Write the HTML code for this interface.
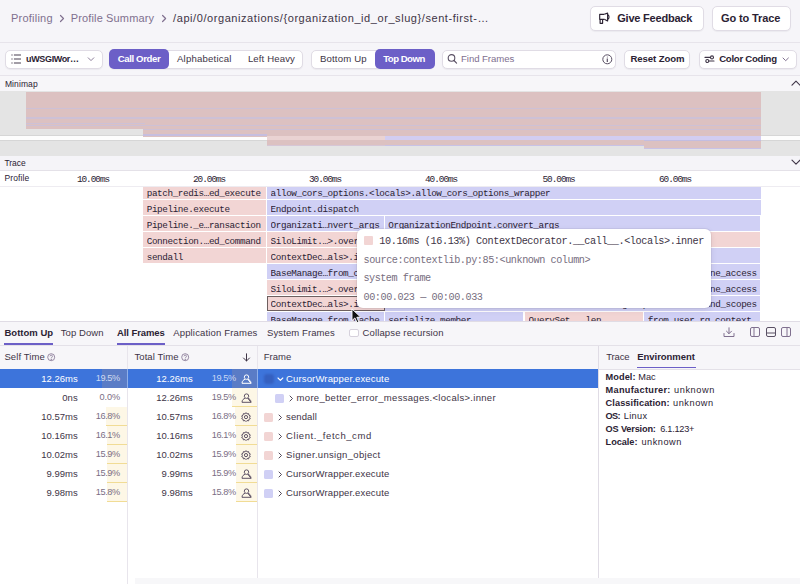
<!DOCTYPE html>
<html><head><meta charset="utf-8"><style>*{box-sizing:border-box;margin:0;padding:0}
html,body{width:800px;height:584px;overflow:hidden;background:#fff;font-family:"Liberation Sans",sans-serif;color:#2b2233;position:relative}
.a{position:absolute}
.t{position:absolute;white-space:nowrap}
svg{position:absolute;overflow:visible}
</style></head><body>
<div class="a" style="left:0px;top:0px;width:800px;height:42px;background:#f6f5f9"></div>
<div class="a" style="left:0px;top:42px;width:800px;height:1px;background:#e7e4eb"></div>
<div class="t" style="left:11.00px;top:12.59px;font-size:11px;line-height:11px;font-weight:400;color:#80708f;font-family:'Liberation Sans',sans-serif;letter-spacing:0.222px;">Profiling</div>
<svg style="left:0;top:0" width="800" height="42"><g fill="none" stroke="#80708f" stroke-width="1.2" stroke-linecap="round" stroke-linejoin="round"><polyline points="60.5,15.5 63.5,18.5 60.5,21.5"/><polyline points="162.6,15.5 165.6,18.5 162.6,21.5"/></g></svg>
<div class="t" style="left:70.75px;top:12.59px;font-size:11px;line-height:11px;font-weight:400;color:#80708f;font-family:'Liberation Sans',sans-serif;letter-spacing:0.140px;">Profile Summary</div>
<div class="t" style="left:173.10px;top:12.59px;font-size:11px;line-height:11px;font-weight:400;color:#3e3446;font-family:'Liberation Sans',sans-serif;letter-spacing:0.567px;">/api/0/organizations/{organization_id_or_slug}/sent-first-…</div>
<div class="a" style="left:589.5px;top:6px;width:114px;height:25px;background:#fff;border:1px solid #e0dce5;border-radius:5px;box-shadow:0 1px 1px rgba(43,34,51,.05)"></div>
<div class="a" style="left:711.5px;top:6px;width:79px;height:25px;background:#fff;border:1px solid #e0dce5;border-radius:5px;box-shadow:0 1px 1px rgba(43,34,51,.05)"></div>
<svg style="left:594px;top:8px" width="24" height="20" viewBox="0 0 24 20"><g fill="none" stroke="#2b2233" stroke-width="1.15" stroke-linejoin="round"><path d="M10.3,6.3 H5.7 V11.3 H10.3"/><path d="M10.3,6.3 L13.6,5.1 V12.9 L10.3,11.3"/><path d="M13.9,6.9 C15.4,7.4 15.4,10.6 13.9,11.1"/><path d="M6.1,11.4 V15.3 H8.6 V11.4"/></g></svg>
<div class="t" style="left:617.25px;top:13.19px;font-size:11px;line-height:11px;font-weight:700;color:#2b2233;font-family:'Liberation Sans',sans-serif;letter-spacing:-0.211px;">Give Feedback</div>
<div class="t" style="left:721.00px;top:13.19px;font-size:11px;line-height:11px;font-weight:700;color:#2b2233;font-family:'Liberation Sans',sans-serif;letter-spacing:-0.120px;">Go to Trace</div>
<div class="a" style="left:0px;top:43px;width:800px;height:32px;background:#f6f5f9"></div>
<div class="a" style="left:0px;top:75px;width:800px;height:1px;background:#e7e4eb"></div>
<div class="a" style="left:5px;top:49.5px;width:97.5px;height:19px;background:#fff;border:1px solid #e0dce5;border-radius:5px;box-shadow:0 1px 1px rgba(43,34,51,.05)"></div>
<svg style="left:11px;top:54px" width="11" height="10" viewBox="0 0 11 10"><g fill="none" stroke="#3e3446" stroke-width="0.95" stroke-linecap="round"><path d="M0.8,1 H1.2 M0.8,5 H1.2 M0.8,9 H1.2"/><path d="M3.3,1 H9.6 M3.3,5 H9.6 M3.3,9 H9.6"/></g></svg>
<div class="t" style="left:26.10px;top:54.68px;font-size:9.0px;line-height:9.0px;font-weight:700;color:#2b2233;font-family:'Liberation Sans',sans-serif;letter-spacing:-0.366px;">uWSGIWor…</div>
<svg style="left:87px;top:56px" width="8" height="6" viewBox="0 0 8 6"><polyline points="1.2,1.8 4,4.6 6.8,1.8" fill="none" stroke="#80708f" stroke-width="0.9" stroke-linecap="round" stroke-linejoin="round"/></svg>
<div class="a" style="left:109px;top:49.5px;width:194px;height:19px;background:#fff;border:1px solid #e0dce5;border-radius:5px;box-shadow:0 1px 1px rgba(43,34,51,.05)"></div>
<div class="a" style="left:108.8px;top:48.8px;width:60.2px;height:20.6px;background:#6c5fc7;border-radius:5px"></div>
<div class="t" style="left:117.65px;top:53.77px;font-size:9.6px;line-height:9.6px;font-weight:700;color:#fff;font-family:'Liberation Sans',sans-serif;letter-spacing:-0.367px;">Call Order</div>
<div class="t" style="left:177.00px;top:53.87px;font-size:9.6px;line-height:9.6px;font-weight:400;color:#3e3446;font-family:'Liberation Sans',sans-serif;letter-spacing:0.192px;">Alphabetical</div>
<div class="t" style="left:247.90px;top:53.87px;font-size:9.6px;line-height:9.6px;font-weight:400;color:#3e3446;font-family:'Liberation Sans',sans-serif;letter-spacing:0.126px;">Left Heavy</div>
<div class="a" style="left:310.8px;top:49.5px;width:123.7px;height:19px;background:#fff;border:1px solid #e0dce5;border-radius:5px;box-shadow:0 1px 1px rgba(43,34,51,.05)"></div>
<div class="a" style="left:375px;top:48.8px;width:59.5px;height:20.6px;background:#6c5fc7;border-radius:5px"></div>
<div class="t" style="left:319.90px;top:53.87px;font-size:9.6px;line-height:9.6px;font-weight:400;color:#3e3446;font-family:'Liberation Sans',sans-serif;letter-spacing:0.170px;">Bottom Up</div>
<div class="t" style="left:383.20px;top:53.87px;font-size:9.6px;line-height:9.6px;font-weight:700;color:#fff;font-family:'Liberation Sans',sans-serif;letter-spacing:-0.512px;">Top Down</div>
<div class="a" style="left:441.6px;top:49.5px;width:174.5px;height:19px;background:#fff;border:1px solid #e0dce5;border-radius:5px;box-shadow:0 1px 1px rgba(43,34,51,.05)"></div>
<svg style="left:447px;top:54px" width="11" height="11" viewBox="0 0 11 11"><g fill="none" stroke="#5a5064" stroke-width="1.1" stroke-linecap="round"><circle cx="4.5" cy="3.9" r="3.3"/><path d="M7,6.5 L9.6,9.2"/></g></svg>
<div class="t" style="left:461.00px;top:53.87px;font-size:9.6px;line-height:9.6px;font-weight:400;color:#80708f;font-family:'Liberation Sans',sans-serif;letter-spacing:-0.055px;">Find Frames</div>
<svg style="left:602px;top:54px" width="11" height="11" viewBox="0 0 11 11"><g fill="none" stroke="#5a5064" stroke-width="1"><circle cx="5.3" cy="5.3" r="4.5"/><path d="M5.3,4.6 V8" stroke-width="1.2"/><circle cx="5.3" cy="2.9" r="0.5" fill="#5a5064" stroke="none"/></g></svg>
<div class="a" style="left:623.7px;top:49.5px;width:66.6px;height:19px;background:#fff;border:1px solid #e0dce5;border-radius:5px;box-shadow:0 1px 1px rgba(43,34,51,.05)"></div>
<div class="t" style="left:630.50px;top:53.87px;font-size:9.6px;line-height:9.6px;font-weight:700;color:#2b2233;font-family:'Liberation Sans',sans-serif;letter-spacing:-0.097px;">Reset Zoom</div>
<div class="a" style="left:698.75px;top:49.5px;width:97.85px;height:19px;background:#fff;border:1px solid #e0dce5;border-radius:5px;box-shadow:0 1px 1px rgba(43,34,51,.05)"></div>
<svg style="left:704px;top:54px" width="12" height="10" viewBox="0 0 12 10"><g fill="none" stroke="#3e3446" stroke-width="1.1" stroke-linecap="round"><path d="M1,3.4 H6.3 M4.9,7 H10"/><circle cx="8" cy="3.4" r="1.5"/><circle cx="3.3" cy="7" r="1.5"/></g></svg>
<div class="t" style="left:719.20px;top:53.87px;font-size:9.6px;line-height:9.6px;font-weight:700;color:#2b2233;font-family:'Liberation Sans',sans-serif;letter-spacing:-0.263px;">Color Coding</div>
<svg style="left:782px;top:57px" width="8" height="5" viewBox="0 0 8 5"><polyline points="1,1 3.7,3.7 6.4,1" fill="none" stroke="#80708f" stroke-width="1" stroke-linecap="round" stroke-linejoin="round"/></svg>
<div class="a" style="left:0px;top:76px;width:800px;height:15px;background:#f7f6f9"></div>
<div class="t" style="left:4.90px;top:80.00px;font-size:8.5px;line-height:8.5px;font-weight:400;color:#2b2233;font-family:'Liberation Sans',sans-serif;letter-spacing:0.101px;">Minimap</div>
<div class="a" style="left:0px;top:91px;width:800px;height:65px;background:#e4e4e4"></div>
<div class="a" style="left:0px;top:135.5px;width:800px;height:4.8px;background:#fdfdfd"></div>
<div class="a" style="left:0px;top:135px;width:800px;height:0.6px;background:#d6d6d6"></div>
<div class="a" style="left:0px;top:140.2px;width:800px;height:0.6px;background:#d6d6d6"></div>
<div class="a" style="left:26.2px;top:91.8px;width:734.6px;height:37px;background:#dcc1c1"></div>
<div class="a" style="left:143px;top:128.8px;width:617.8px;height:8.7px;background:#dcc1c1"></div>
<div class="a" style="left:266.5px;top:137.5px;width:494.3px;height:7px;background:#dcc1c1"></div>
<div class="a" style="left:644px;top:144.5px;width:116.8px;height:4px;background:#dcc1c1"></div>
<div class="a" style="left:26.2px;top:108.3px;width:734.6px;height:1px;background:#cdc1d6"></div>
<div class="a" style="left:26.2px;top:117.4px;width:734.6px;height:1.6px;background:#cdc1d6"></div>
<div class="a" style="left:26.2px;top:122.6px;width:119px;height:1px;background:#cdc1d6"></div>
<div class="a" style="left:26.2px;top:125.2px;width:734.6px;height:1px;background:#cdc1d6"></div>
<div class="a" style="left:143px;top:129.3px;width:617.8px;height:0.8px;background:#cdc1d6"></div>
<div class="a" style="left:143px;top:134px;width:123.5px;height:1.5px;background:#c6bedf"></div>
<div class="a" style="left:266.5px;top:135.6px;width:118.5px;height:4.6px;background:#ead3d3"></div>
<div class="a" style="left:385px;top:135.8px;width:375.8px;height:4.4px;background:#d2cdf1"></div>
<div class="a" style="left:266.5px;top:144.5px;width:118.5px;height:0.8px;background:#d6c6d6"></div>
<div class="a" style="left:385px;top:144.6px;width:259px;height:1.2px;background:#c8c2e6"></div>
<div class="a" style="left:644px;top:140.2px;width:116.8px;height:1px;background:#c3bde0"></div>
<div class="a" style="left:644px;top:148px;width:116.8px;height:1px;background:#c8c2e6"></div>
<div class="a" style="left:0px;top:155.8px;width:800px;height:14.7px;background:#f5f4f8"></div>
<div class="a" style="left:0px;top:170.3px;width:800px;height:0.8px;background:#e4e1e8"></div>
<div class="t" style="left:4.45px;top:158.70px;font-size:8.5px;line-height:8.5px;font-weight:400;color:#2b2233;font-family:'Liberation Sans',sans-serif;letter-spacing:-0.021px;">Trace</div>
<svg style="left:791px;top:159px" width="10" height="7" viewBox="0 0 10 7"><polyline points="1,1.2 5,5.2 9,1.2" fill="none" stroke="#3e3446" stroke-width="1.1" stroke-linecap="round" stroke-linejoin="round"/></svg>
<svg style="left:791px;top:80.3px" width="10" height="7" viewBox="0 0 10 7"><polyline points="1,5.2 5,1.2 9,5.2" fill="none" stroke="#3e3446" stroke-width="1.1" stroke-linecap="round" stroke-linejoin="round"/></svg>
<div class="t" style="left:4.45px;top:174.00px;font-size:8.5px;line-height:8.5px;font-weight:400;color:#2b2233;font-family:'Liberation Sans',sans-serif;letter-spacing:0.106px;">Profile</div>
<div class="a" style="left:0px;top:185.8px;width:800px;height:0.6px;background:#eeecf1"></div>
<div class="t" style="left:76.90px;top:174.89px;font-size:9.4px;line-height:9.4px;font-weight:400;color:#2b2233;font-family:'Liberation Mono',monospace;letter-spacing:-1.026px;">10.00ms</div>
<div class="t" style="left:193.00px;top:174.89px;font-size:9.4px;line-height:9.4px;font-weight:400;color:#2b2233;font-family:'Liberation Mono',monospace;letter-spacing:-1.026px;">20.00ms</div>
<div class="t" style="left:309.00px;top:174.89px;font-size:9.4px;line-height:9.4px;font-weight:400;color:#2b2233;font-family:'Liberation Mono',monospace;letter-spacing:-1.026px;">30.00ms</div>
<div class="t" style="left:425.00px;top:174.89px;font-size:9.4px;line-height:9.4px;font-weight:400;color:#2b2233;font-family:'Liberation Mono',monospace;letter-spacing:-1.026px;">40.00ms</div>
<div class="t" style="left:542.50px;top:174.89px;font-size:9.4px;line-height:9.4px;font-weight:400;color:#2b2233;font-family:'Liberation Mono',monospace;letter-spacing:-1.026px;">50.00ms</div>
<div class="t" style="left:659.00px;top:174.89px;font-size:9.4px;line-height:9.4px;font-weight:400;color:#2b2233;font-family:'Liberation Mono',monospace;letter-spacing:-1.026px;">60.00ms</div>
<div class="a" style="left:143.15px;top:186.6px;width:122.85px;height:12.569999999999993px;background:#f2d5d4"></div>
<div class="t" style="left:146.75px;top:188.94px;font-size:9.3px;line-height:9.3px;font-weight:400;color:#2b2233;font-family:'Liberation Mono',monospace;letter-spacing:-0.400px;overflow:hidden;width:119.2px">patch_redis…ed_execute</div>
<div class="a" style="left:267px;top:186.6px;width:493.5px;height:12.569999999999993px;background:#d0d0f5"></div>
<div class="t" style="left:270.60px;top:188.94px;font-size:9.3px;line-height:9.3px;font-weight:400;color:#2b2233;font-family:'Liberation Mono',monospace;letter-spacing:-0.400px;overflow:hidden;width:489.9px">allow_cors_options.&lt;locals&gt;.allow_cors_options_wrapper</div>
<div class="a" style="left:143.15px;top:200.4px;width:122.85px;height:14.7px;background:#f2d5d4"></div>
<div class="t" style="left:146.75px;top:204.87px;font-size:9.3px;line-height:9.3px;font-weight:400;color:#2b2233;font-family:'Liberation Mono',monospace;letter-spacing:-0.400px;overflow:hidden;width:119.2px">Pipeline.execute</div>
<div class="a" style="left:267px;top:200.4px;width:493.5px;height:14.7px;background:#d0d0f5"></div>
<div class="t" style="left:270.60px;top:204.87px;font-size:9.3px;line-height:9.3px;font-weight:400;color:#2b2233;font-family:'Liberation Mono',monospace;letter-spacing:-0.400px;overflow:hidden;width:489.9px">Endpoint.dispatch</div>
<div class="a" style="left:143.15px;top:216.32999999999998px;width:122.85px;height:14.7px;background:#f2d5d4"></div>
<div class="t" style="left:146.75px;top:220.80px;font-size:9.3px;line-height:9.3px;font-weight:400;color:#2b2233;font-family:'Liberation Mono',monospace;letter-spacing:-0.400px;overflow:hidden;width:119.2px">Pipeline._e…ransaction</div>
<div class="a" style="left:267px;top:216.32999999999998px;width:116.5px;height:14.7px;background:#d0d0f5"></div>
<div class="t" style="left:270.60px;top:220.80px;font-size:9.3px;line-height:9.3px;font-weight:400;color:#2b2233;font-family:'Liberation Mono',monospace;letter-spacing:-0.400px;overflow:hidden;width:112.9px">Organizati…nvert_args</div>
<div class="a" style="left:384.7px;top:216.32999999999998px;width:375.8px;height:14.7px;background:#d0d0f5"></div>
<div class="t" style="left:388.30px;top:220.80px;font-size:9.3px;line-height:9.3px;font-weight:400;color:#2b2233;font-family:'Liberation Mono',monospace;letter-spacing:-0.400px;overflow:hidden;width:372.2px">OrganizationEndpoint.convert_args</div>
<div class="a" style="left:143.15px;top:232.26px;width:122.85px;height:14.7px;background:#f2d5d4"></div>
<div class="t" style="left:146.75px;top:236.73px;font-size:9.3px;line-height:9.3px;font-weight:400;color:#2b2233;font-family:'Liberation Mono',monospace;letter-spacing:-0.400px;overflow:hidden;width:119.2px">Connection.…ed_command</div>
<div class="a" style="left:267px;top:232.26px;width:116.5px;height:14.7px;background:#f2d5d4"></div>
<div class="t" style="left:270.60px;top:236.73px;font-size:9.3px;line-height:9.3px;font-weight:400;color:#2b2233;font-family:'Liberation Mono',monospace;letter-spacing:-0.400px;overflow:hidden;width:112.9px">SiloLimit.…&gt;.overall</div>
<div class="a" style="left:384.7px;top:232.26px;width:375.8px;height:14.7px;background:#f2d5d4"></div>
<div class="a" style="left:143.15px;top:248.19px;width:122.85px;height:14.7px;background:#f2d5d4"></div>
<div class="t" style="left:146.75px;top:252.66px;font-size:9.3px;line-height:9.3px;font-weight:400;color:#2b2233;font-family:'Liberation Mono',monospace;letter-spacing:-0.400px;overflow:hidden;width:119.2px">sendall</div>
<div class="a" style="left:267px;top:248.19px;width:116.5px;height:14.7px;background:#f2d5d4"></div>
<div class="t" style="left:270.60px;top:252.66px;font-size:9.3px;line-height:9.3px;font-weight:400;color:#2b2233;font-family:'Liberation Mono',monospace;letter-spacing:-0.400px;overflow:hidden;width:112.9px">ContextDec…als&gt;.inner</div>
<div class="a" style="left:384.7px;top:248.19px;width:375.8px;height:14.7px;background:#d0d0f5"></div>
<div class="a" style="left:267px;top:264.12px;width:116.5px;height:14.7px;background:#d0d0f5"></div>
<div class="t" style="left:270.60px;top:268.59px;font-size:9.3px;line-height:9.3px;font-weight:400;color:#2b2233;font-family:'Liberation Mono',monospace;letter-spacing:-0.400px;overflow:hidden;width:112.9px">BaseManage…from_cache</div>
<div class="a" style="left:384.7px;top:264.12px;width:375.8px;height:14.7px;background:#d0d0f5"></div>
<div class="t" style="left:570.23px;top:268.59px;font-size:9.3px;line-height:9.3px;font-weight:400;color:#2b2233;font-family:'Liberation Mono',monospace;letter-spacing:-0.400px;">QuerySet._fetch_all_determine_access</div>
<div class="a" style="left:267px;top:280.05px;width:116.5px;height:14.7px;background:#f2d5d4"></div>
<div class="t" style="left:270.60px;top:284.52px;font-size:9.3px;line-height:9.3px;font-weight:400;color:#2b2233;font-family:'Liberation Mono',monospace;letter-spacing:-0.400px;overflow:hidden;width:112.9px">SiloLimit.…&gt;.overall</div>
<div class="a" style="left:384.7px;top:280.05px;width:375.8px;height:14.7px;background:#d0d0f5"></div>
<div class="t" style="left:570.23px;top:284.52px;font-size:9.3px;line-height:9.3px;font-weight:400;color:#2b2233;font-family:'Liberation Mono',monospace;letter-spacing:-0.400px;">QuerySet._fetch_all_determine_access</div>
<div class="a" style="left:267px;top:295.98px;width:116.5px;height:14.7px;background:#f2d5d4"></div>
<div class="t" style="left:270.60px;top:300.45px;font-size:9.3px;line-height:9.3px;font-weight:400;color:#2b2233;font-family:'Liberation Mono',monospace;letter-spacing:-0.400px;overflow:hidden;width:112.9px">ContextDec…als&gt;.inner</div>
<div class="a" style="left:384.7px;top:295.98px;width:375.8px;height:14.7px;background:#d0d0f5"></div>
<div class="t" style="left:622.02px;top:300.45px;font-size:9.3px;line-height:9.3px;font-weight:400;color:#2b2233;font-family:'Liberation Mono',monospace;letter-spacing:-0.400px;">get_permissions_and_scopes</div>
<div class="a" style="left:267px;top:311.90999999999997px;width:116.5px;height:14.7px;background:#d0d0f5"></div>
<div class="t" style="left:270.60px;top:316.38px;font-size:9.3px;line-height:9.3px;font-weight:400;color:#2b2233;font-family:'Liberation Mono',monospace;letter-spacing:-0.400px;overflow:hidden;width:112.9px">BaseManage.from_cache</div>
<div class="a" style="left:384.7px;top:311.90999999999997px;width:138.8px;height:14.7px;background:#d0d0f5"></div>
<div class="t" style="left:388.30px;top:316.38px;font-size:9.3px;line-height:9.3px;font-weight:400;color:#2b2233;font-family:'Liberation Mono',monospace;letter-spacing:-0.400px;overflow:hidden;width:135.2px">serialize_member</div>
<div class="a" style="left:525px;top:311.90999999999997px;width:117.79999999999995px;height:14.7px;background:#f2d5d4"></div>
<div class="t" style="left:528.60px;top:316.38px;font-size:9.3px;line-height:9.3px;font-weight:400;color:#2b2233;font-family:'Liberation Mono',monospace;letter-spacing:-0.400px;overflow:hidden;width:114.2px">QuerySet.__len__</div>
<div class="a" style="left:644.2px;top:311.90999999999997px;width:116.29999999999995px;height:14.7px;background:#d0d0f5"></div>
<div class="t" style="left:647.80px;top:316.38px;font-size:9.3px;line-height:9.3px;font-weight:400;color:#2b2233;font-family:'Liberation Mono',monospace;letter-spacing:-0.400px;overflow:hidden;width:112.7px">from_user…rg_context</div>
<div class="a" style="left:267px;top:295.68px;width:117.5px;height:15.299999999999999px;border:1px solid #6e5f5f;"></div>
<div class="a" style="left:357.3px;top:229px;width:354px;height:79px;background:#fff;border-radius:6px;box-shadow:0 0 0 1px rgba(43,34,51,.06),0 2px 6px rgba(43,34,51,.10)"></div>
<div class="a" style="left:363.5px;top:235.9px;width:9.5px;height:9px;background:#f2d5d4;border-radius:1px"></div>
<div class="t" style="left:379.30px;top:236.58px;font-size:10.2px;line-height:10.2px;font-weight:400;color:#3e3446;font-family:'Liberation Mono',monospace;letter-spacing:-0.419px;">10.16ms (16.13%) ContextDecorator.__call__.&lt;locals&gt;.inner</div>
<div class="t" style="left:363.50px;top:255.88px;font-size:10.2px;line-height:10.2px;font-weight:400;color:#776e80;font-family:'Liberation Mono',monospace;letter-spacing:-0.447px;">source:contextlib.py:85:&lt;unknown column&gt;</div>
<div class="t" style="left:363.50px;top:274.28px;font-size:10.2px;line-height:10.2px;font-weight:400;color:#776e80;font-family:'Liberation Mono',monospace;letter-spacing:-0.523px;">system frame</div>
<div class="t" style="left:363.50px;top:292.58px;font-size:10.2px;line-height:10.2px;font-weight:400;color:#776e80;font-family:'Liberation Mono',monospace;letter-spacing:-0.448px;">00:00.023 — 00:00.033</div>
<div class="a" style="left:0px;top:321px;width:800px;height:263px;background:#fff"></div>
<div class="a" style="left:0px;top:321px;width:800px;height:24.3px;background:#f7f6f9"></div>
<div class="a" style="left:0px;top:320.8px;width:800px;height:1px;background:#e0dce5"></div>
<div class="a" style="left:0px;top:345px;width:800px;height:0.8px;background:#e4e1e8"></div>
<div class="t" style="left:4.50px;top:328.46px;font-size:9.5px;line-height:9.5px;font-weight:700;color:#2b2233;font-family:'Liberation Sans',sans-serif;letter-spacing:0.001px;">Bottom Up</div>
<div class="t" style="left:60.75px;top:328.46px;font-size:9.5px;line-height:9.5px;font-weight:400;color:#3e3446;font-family:'Liberation Sans',sans-serif;letter-spacing:0.077px;">Top Down</div>
<div class="a" style="left:4.2px;top:343px;width:49px;height:1.6px;background:#6c5fc7"></div>
<div class="t" style="left:117.10px;top:328.46px;font-size:9.5px;line-height:9.5px;font-weight:700;color:#2b2233;font-family:'Liberation Sans',sans-serif;letter-spacing:-0.110px;">All Frames</div>
<div class="a" style="left:117px;top:343px;width:47.75px;height:1.6px;background:#6c5fc7"></div>
<div class="t" style="left:173.20px;top:328.46px;font-size:9.5px;line-height:9.5px;font-weight:400;color:#3e3446;font-family:'Liberation Sans',sans-serif;letter-spacing:0.167px;">Application Frames</div>
<div class="t" style="left:267.00px;top:328.46px;font-size:9.5px;line-height:9.5px;font-weight:400;color:#3e3446;font-family:'Liberation Sans',sans-serif;letter-spacing:0.103px;">System Frames</div>
<div class="a" style="left:349.3px;top:328.8px;width:9.5px;height:8.7px;background:#fff;border:1px solid #d6d1dc;border-radius:2px"></div>
<div class="t" style="left:362.50px;top:328.46px;font-size:9.5px;line-height:9.5px;font-weight:400;color:#3e3446;font-family:'Liberation Sans',sans-serif;letter-spacing:0.139px;">Collapse recursion</div>
<svg style="left:723px;top:327px" width="12" height="11" viewBox="0 0 12 11"><g fill="none" stroke="#80708f" stroke-width="1" stroke-linecap="round" stroke-linejoin="round"><path d="M6,0.8 V6.5 M3.5,4.2 L6,6.7 L8.5,4.2"/><path d="M1,6.5 V9.5 H11 V6.5"/></g></svg>
<svg style="left:750px;top:327.3px" width="10" height="10" viewBox="0 0 10 10"><g fill="none" stroke="#80708f" stroke-width="1"><rect x="0.5" y="0.5" width="9" height="9" rx="1.5"/><path d="M4,0.5 V9.5"/></g></svg>
<svg style="left:765.7px;top:327.3px" width="10" height="10" viewBox="0 0 10 10"><g fill="none" stroke="#5a5064" stroke-width="1"><rect x="0.5" y="0.5" width="9" height="9" rx="1.5"/><path d="M0.5,6 H9.5"/></g></svg>
<svg style="left:781.4px;top:327.3px" width="10" height="10" viewBox="0 0 10 10"><g fill="none" stroke="#80708f" stroke-width="1"><rect x="0.5" y="0.5" width="9" height="9" rx="1.5"/><path d="M6,0.5 V9.5"/></g></svg>
<div class="a" style="left:0px;top:345.8px;width:598.3px;height:23.2px;background:#f7f6f9"></div>
<div class="a" style="left:0px;top:368.6px;width:598.3px;height:0.8px;background:#e4e1e8"></div>
<div class="t" style="left:4.40px;top:352.46px;font-size:9.5px;line-height:9.5px;font-weight:400;color:#3e3446;font-family:'Liberation Sans',sans-serif;letter-spacing:0.090px;">Self Time</div>
<svg style="left:47px;top:353px" width="9" height="9" viewBox="0 0 9 9"><g fill="none" stroke="#80708f" stroke-width="0.8"><circle cx="4.2" cy="4.2" r="3.5"/><path d="M3,3.3 C3,1.8 5.5,1.8 5.5,3.3 C5.5,4.3 4.2,4.2 4.2,5.3"/><circle cx="4.2" cy="6.5" r="0.3" fill="#80708f"/></g></svg>
<div class="t" style="left:134.45px;top:352.46px;font-size:9.5px;line-height:9.5px;font-weight:400;color:#3e3446;font-family:'Liberation Sans',sans-serif;letter-spacing:0.080px;">Total Time</div>
<svg style="left:181px;top:353px" width="9" height="9" viewBox="0 0 9 9"><g fill="none" stroke="#80708f" stroke-width="0.8"><circle cx="4.2" cy="4.2" r="3.5"/><path d="M3,3.3 C3,1.8 5.5,1.8 5.5,3.3 C5.5,4.3 4.2,4.2 4.2,5.3"/><circle cx="4.2" cy="6.5" r="0.3" fill="#80708f"/></g></svg>
<svg style="left:242px;top:352.5px" width="9" height="9" viewBox="0 0 9 9"><g fill="none" stroke="#3e3446" stroke-width="1" stroke-linecap="round" stroke-linejoin="round"><path d="M4.5,0.8 V8 M1.5,5 L4.5,8 L7.5,5"/></g></svg>
<div class="t" style="left:263.80px;top:352.46px;font-size:9.5px;line-height:9.5px;font-weight:400;color:#3e3446;font-family:'Liberation Sans',sans-serif;letter-spacing:0.009px;">Frame</div>
<div class="a" style="left:0px;top:369.3px;width:598.3px;height:18.7px;background:#3d74db"></div>
<div class="a" style="left:102.396px;top:369.3px;width:24.804000000000002px;height:18.7px;background:#5a7cc6"></div>
<div class="a" style="left:231.52800000000002px;top:369.3px;width:25.272px;height:18.7px;background:#5a7cc6"></div>
<div class="t" style="left:41.21px;top:373.71px;font-size:9.5px;line-height:9.5px;font-weight:400;color:#fff;font-family:'Liberation Sans',sans-serif;letter-spacing:0.000px;">12.26ms</div>
<div class="t" style="left:95.80px;top:373.96px;font-size:9.2px;line-height:9.2px;font-weight:400;color:rgba(255,255,255,.72);font-family:'Liberation Sans',sans-serif;letter-spacing:-0.420px;">19.5%</div>
<div class="t" style="left:156.31px;top:373.71px;font-size:9.5px;line-height:9.5px;font-weight:400;color:#fff;font-family:'Liberation Sans',sans-serif;letter-spacing:0.000px;">12.26ms</div>
<div class="t" style="left:211.70px;top:373.96px;font-size:9.2px;line-height:9.2px;font-weight:400;color:rgba(255,255,255,.72);font-family:'Liberation Sans',sans-serif;letter-spacing:-0.420px;">19.5%</div>
<svg style="left:240.5px;top:373.8px" width="11" height="10" viewBox="0 0 11 10"><g fill="none" stroke="#fff" stroke-width="1"><path d="M3.3,3.1 A2.2,2.2 0 1 1 7.7,3.1 C7.7,4.4 6.9,5.2 5.5,5.4 C4.1,5.2 3.3,4.4 3.3,3.1 Z"/><path d="M1,9.3 C1,7 2.6,5.6 4.2,5.3 M6.8,5.3 C8.4,5.6 10,7 10,9.3 Z M1,9.3 H10"/></g></svg>
<div class="a" style="left:263.8px;top:373.8px;width:10px;height:10px;background:#3560c0;border-radius:3px;filter:blur(1px)"></div>
<svg style="left:277px;top:376.8px" width="7" height="5" viewBox="0 0 7 5"><polyline points="1,1 3.4,3.3 5.8,1" fill="none" stroke="#fff" stroke-width="1.1" stroke-linecap="round" stroke-linejoin="round"/></svg>
<div class="t" style="left:286.00px;top:373.71px;font-size:9.5px;line-height:9.5px;font-weight:400;color:#fff;font-family:'Liberation Sans',sans-serif;letter-spacing:0.152px;">CursorWrapper.execute</div>
<div class="a" style="left:231.52800000000002px;top:388.3px;width:25.272px;height:19px;background:#fdf7e6"></div>
<div class="a" style="left:231.52800000000002px;top:405.5px;width:25.272px;height:1.8px;background:#f1dc95"></div>
<div class="t" style="left:62.33px;top:392.71px;font-size:9.5px;line-height:9.5px;font-weight:400;color:#3e3446;font-family:'Liberation Sans',sans-serif;letter-spacing:0.000px;">0ns</div>
<div class="t" style="left:99.50px;top:392.96px;font-size:9.2px;line-height:9.2px;font-weight:400;color:#7a6e84;font-family:'Liberation Sans',sans-serif;letter-spacing:-0.091px;">0.0%</div>
<div class="t" style="left:156.31px;top:392.71px;font-size:9.5px;line-height:9.5px;font-weight:400;color:#3e3446;font-family:'Liberation Sans',sans-serif;letter-spacing:0.000px;">12.26ms</div>
<div class="t" style="left:211.70px;top:392.96px;font-size:9.2px;line-height:9.2px;font-weight:400;color:#7a6e84;font-family:'Liberation Sans',sans-serif;letter-spacing:-0.420px;">19.5%</div>
<svg style="left:240.5px;top:392.8px" width="11" height="10" viewBox="0 0 11 10"><g fill="none" stroke="#5f5366" stroke-width="1"><path d="M3.3,3.1 A2.2,2.2 0 1 1 7.7,3.1 C7.7,4.4 6.9,5.2 5.5,5.4 C4.1,5.2 3.3,4.4 3.3,3.1 Z"/><path d="M1,9.3 C1,7 2.6,5.6 4.2,5.3 M6.8,5.3 C8.4,5.6 10,7 10,9.3 Z M1,9.3 H10"/></g></svg>
<div class="a" style="left:274.5px;top:393.6px;width:9.3px;height:9.2px;background:#d0d0f5;border-radius:1.5px"></div>
<svg style="left:288.7px;top:395.1px" width="5" height="7" viewBox="0 0 5 7"><polyline points="1,1 3.5,3.5 1,6" fill="none" stroke="#3e3446" stroke-width="0.9" stroke-linecap="round" stroke-linejoin="round"/></svg>
<div class="t" style="left:296.60px;top:392.71px;font-size:9.5px;line-height:9.5px;font-weight:400;color:#3e3446;font-family:'Liberation Sans',sans-serif;letter-spacing:0.301px;">more_better_error_messages.&lt;locals&gt;.inner</div>
<div class="a" style="left:105.8304px;top:407.3px;width:21.369600000000002px;height:19px;background:#fdf7e6"></div>
<div class="a" style="left:105.8304px;top:424.5px;width:21.369600000000002px;height:1.8px;background:#f1dc95"></div>
<div class="a" style="left:235.02720000000002px;top:407.3px;width:21.7728px;height:19px;background:#fdf7e6"></div>
<div class="a" style="left:235.02720000000002px;top:424.5px;width:21.7728px;height:1.8px;background:#f1dc95"></div>
<div class="t" style="left:41.21px;top:411.71px;font-size:9.5px;line-height:9.5px;font-weight:400;color:#3e3446;font-family:'Liberation Sans',sans-serif;letter-spacing:0.000px;">10.57ms</div>
<div class="t" style="left:95.80px;top:411.96px;font-size:9.2px;line-height:9.2px;font-weight:400;color:#7a6e84;font-family:'Liberation Sans',sans-serif;letter-spacing:-0.420px;">16.8%</div>
<div class="t" style="left:156.31px;top:411.71px;font-size:9.5px;line-height:9.5px;font-weight:400;color:#3e3446;font-family:'Liberation Sans',sans-serif;letter-spacing:0.000px;">10.57ms</div>
<div class="t" style="left:211.70px;top:411.96px;font-size:9.2px;line-height:9.2px;font-weight:400;color:#7a6e84;font-family:'Liberation Sans',sans-serif;letter-spacing:-0.420px;">16.8%</div>
<svg style="left:241px;top:411.6px" width="10" height="10" viewBox="0 0 10 10"><g fill="none" stroke="#5f5366" stroke-width="1"><path d="M5,0.6 L6,1.9 L7.6,1.6 L7.9,3.1 L9.3,3.9 L8.6,5.3 L9.3,6.7 L7.9,7.3 L7.6,8.9 L6,8.5 L5,9.6 L4,8.5 L2.4,8.9 L2.1,7.3 L0.7,6.7 L1.4,5.3 L0.7,3.9 L2.1,3.1 L2.4,1.6 L4,1.9 Z"/><circle cx="5" cy="5.1" r="1.6"/></g></svg>
<div class="a" style="left:264px;top:412.6px;width:9.3px;height:9.2px;background:#f2d5d4;border-radius:1.5px"></div>
<svg style="left:278.2px;top:414.1px" width="5" height="7" viewBox="0 0 5 7"><polyline points="1,1 3.5,3.5 1,6" fill="none" stroke="#3e3446" stroke-width="0.9" stroke-linecap="round" stroke-linejoin="round"/></svg>
<div class="t" style="left:286.10px;top:411.71px;font-size:9.5px;line-height:9.5px;font-weight:400;color:#3e3446;font-family:'Liberation Sans',sans-serif;letter-spacing:0.101px;">sendall</div>
<div class="a" style="left:106.7208px;top:426.3px;width:20.479200000000002px;height:19px;background:#fdf7e6"></div>
<div class="a" style="left:106.7208px;top:443.5px;width:20.479200000000002px;height:1.8px;background:#f1dc95"></div>
<div class="a" style="left:235.9344px;top:426.3px;width:20.8656px;height:19px;background:#fdf7e6"></div>
<div class="a" style="left:235.9344px;top:443.5px;width:20.8656px;height:1.8px;background:#f1dc95"></div>
<div class="t" style="left:41.21px;top:430.71px;font-size:9.5px;line-height:9.5px;font-weight:400;color:#3e3446;font-family:'Liberation Sans',sans-serif;letter-spacing:0.000px;">10.16ms</div>
<div class="t" style="left:95.80px;top:430.96px;font-size:9.2px;line-height:9.2px;font-weight:400;color:#7a6e84;font-family:'Liberation Sans',sans-serif;letter-spacing:-0.420px;">16.1%</div>
<div class="t" style="left:156.31px;top:430.71px;font-size:9.5px;line-height:9.5px;font-weight:400;color:#3e3446;font-family:'Liberation Sans',sans-serif;letter-spacing:0.000px;">10.16ms</div>
<div class="t" style="left:211.70px;top:430.96px;font-size:9.2px;line-height:9.2px;font-weight:400;color:#7a6e84;font-family:'Liberation Sans',sans-serif;letter-spacing:-0.420px;">16.1%</div>
<svg style="left:241px;top:430.6px" width="10" height="10" viewBox="0 0 10 10"><g fill="none" stroke="#5f5366" stroke-width="1"><path d="M5,0.6 L6,1.9 L7.6,1.6 L7.9,3.1 L9.3,3.9 L8.6,5.3 L9.3,6.7 L7.9,7.3 L7.6,8.9 L6,8.5 L5,9.6 L4,8.5 L2.4,8.9 L2.1,7.3 L0.7,6.7 L1.4,5.3 L0.7,3.9 L2.1,3.1 L2.4,1.6 L4,1.9 Z"/><circle cx="5" cy="5.1" r="1.6"/></g></svg>
<div class="a" style="left:264px;top:431.6px;width:9.3px;height:9.2px;background:#f2d5d4;border-radius:1.5px"></div>
<svg style="left:278.2px;top:433.1px" width="5" height="7" viewBox="0 0 5 7"><polyline points="1,1 3.5,3.5 1,6" fill="none" stroke="#3e3446" stroke-width="0.9" stroke-linecap="round" stroke-linejoin="round"/></svg>
<div class="t" style="left:286.10px;top:430.71px;font-size:9.5px;line-height:9.5px;font-weight:400;color:#3e3446;font-family:'Liberation Sans',sans-serif;letter-spacing:0.565px;">Client._fetch_cmd</div>
<div class="a" style="left:106.9752px;top:445.3px;width:20.224800000000002px;height:19px;background:#fdf7e6"></div>
<div class="a" style="left:106.9752px;top:462.5px;width:20.224800000000002px;height:1.8px;background:#f1dc95"></div>
<div class="a" style="left:236.1936px;top:445.3px;width:20.6064px;height:19px;background:#fdf7e6"></div>
<div class="a" style="left:236.1936px;top:462.5px;width:20.6064px;height:1.8px;background:#f1dc95"></div>
<div class="t" style="left:41.21px;top:449.71px;font-size:9.5px;line-height:9.5px;font-weight:400;color:#3e3446;font-family:'Liberation Sans',sans-serif;letter-spacing:0.000px;">10.02ms</div>
<div class="t" style="left:95.80px;top:449.96px;font-size:9.2px;line-height:9.2px;font-weight:400;color:#7a6e84;font-family:'Liberation Sans',sans-serif;letter-spacing:-0.420px;">15.9%</div>
<div class="t" style="left:156.31px;top:449.71px;font-size:9.5px;line-height:9.5px;font-weight:400;color:#3e3446;font-family:'Liberation Sans',sans-serif;letter-spacing:0.000px;">10.02ms</div>
<div class="t" style="left:211.70px;top:449.96px;font-size:9.2px;line-height:9.2px;font-weight:400;color:#7a6e84;font-family:'Liberation Sans',sans-serif;letter-spacing:-0.420px;">15.9%</div>
<svg style="left:241px;top:449.6px" width="10" height="10" viewBox="0 0 10 10"><g fill="none" stroke="#5f5366" stroke-width="1"><path d="M5,0.6 L6,1.9 L7.6,1.6 L7.9,3.1 L9.3,3.9 L8.6,5.3 L9.3,6.7 L7.9,7.3 L7.6,8.9 L6,8.5 L5,9.6 L4,8.5 L2.4,8.9 L2.1,7.3 L0.7,6.7 L1.4,5.3 L0.7,3.9 L2.1,3.1 L2.4,1.6 L4,1.9 Z"/><circle cx="5" cy="5.1" r="1.6"/></g></svg>
<div class="a" style="left:264px;top:450.6px;width:9.3px;height:9.2px;background:#f2d5d4;border-radius:1.5px"></div>
<svg style="left:278.2px;top:452.1px" width="5" height="7" viewBox="0 0 5 7"><polyline points="1,1 3.5,3.5 1,6" fill="none" stroke="#3e3446" stroke-width="0.9" stroke-linecap="round" stroke-linejoin="round"/></svg>
<div class="t" style="left:286.10px;top:449.71px;font-size:9.5px;line-height:9.5px;font-weight:400;color:#3e3446;font-family:'Liberation Sans',sans-serif;letter-spacing:0.312px;">Signer.unsign_object</div>
<div class="a" style="left:106.9752px;top:464.3px;width:20.224800000000002px;height:19px;background:#fdf7e6"></div>
<div class="a" style="left:106.9752px;top:481.5px;width:20.224800000000002px;height:1.8px;background:#f1dc95"></div>
<div class="a" style="left:236.1936px;top:464.3px;width:20.6064px;height:19px;background:#fdf7e6"></div>
<div class="a" style="left:236.1936px;top:481.5px;width:20.6064px;height:1.8px;background:#f1dc95"></div>
<div class="t" style="left:46.50px;top:468.71px;font-size:9.5px;line-height:9.5px;font-weight:400;color:#3e3446;font-family:'Liberation Sans',sans-serif;letter-spacing:0.000px;">9.99ms</div>
<div class="t" style="left:95.80px;top:468.96px;font-size:9.2px;line-height:9.2px;font-weight:400;color:#7a6e84;font-family:'Liberation Sans',sans-serif;letter-spacing:-0.420px;">15.9%</div>
<div class="t" style="left:161.60px;top:468.71px;font-size:9.5px;line-height:9.5px;font-weight:400;color:#3e3446;font-family:'Liberation Sans',sans-serif;letter-spacing:0.000px;">9.99ms</div>
<div class="t" style="left:211.70px;top:468.96px;font-size:9.2px;line-height:9.2px;font-weight:400;color:#7a6e84;font-family:'Liberation Sans',sans-serif;letter-spacing:-0.420px;">15.9%</div>
<svg style="left:240.5px;top:468.8px" width="11" height="10" viewBox="0 0 11 10"><g fill="none" stroke="#5f5366" stroke-width="1"><path d="M3.3,3.1 A2.2,2.2 0 1 1 7.7,3.1 C7.7,4.4 6.9,5.2 5.5,5.4 C4.1,5.2 3.3,4.4 3.3,3.1 Z"/><path d="M1,9.3 C1,7 2.6,5.6 4.2,5.3 M6.8,5.3 C8.4,5.6 10,7 10,9.3 Z M1,9.3 H10"/></g></svg>
<div class="a" style="left:264px;top:469.6px;width:9.3px;height:9.2px;background:#d0d0f5;border-radius:1.5px"></div>
<svg style="left:278.2px;top:471.1px" width="5" height="7" viewBox="0 0 5 7"><polyline points="1,1 3.5,3.5 1,6" fill="none" stroke="#3e3446" stroke-width="0.9" stroke-linecap="round" stroke-linejoin="round"/></svg>
<div class="t" style="left:286.10px;top:468.71px;font-size:9.5px;line-height:9.5px;font-weight:400;color:#3e3446;font-family:'Liberation Sans',sans-serif;letter-spacing:0.152px;">CursorWrapper.execute</div>
<div class="a" style="left:107.1024px;top:483.3px;width:20.0976px;height:19px;background:#fdf7e6"></div>
<div class="a" style="left:107.1024px;top:500.5px;width:20.0976px;height:1.8px;background:#f1dc95"></div>
<div class="a" style="left:236.3232px;top:483.3px;width:20.4768px;height:19px;background:#fdf7e6"></div>
<div class="a" style="left:236.3232px;top:500.5px;width:20.4768px;height:1.8px;background:#f1dc95"></div>
<div class="t" style="left:46.50px;top:487.71px;font-size:9.5px;line-height:9.5px;font-weight:400;color:#3e3446;font-family:'Liberation Sans',sans-serif;letter-spacing:0.000px;">9.98ms</div>
<div class="t" style="left:95.80px;top:487.96px;font-size:9.2px;line-height:9.2px;font-weight:400;color:#7a6e84;font-family:'Liberation Sans',sans-serif;letter-spacing:-0.420px;">15.8%</div>
<div class="t" style="left:161.60px;top:487.71px;font-size:9.5px;line-height:9.5px;font-weight:400;color:#3e3446;font-family:'Liberation Sans',sans-serif;letter-spacing:0.000px;">9.98ms</div>
<div class="t" style="left:211.70px;top:487.96px;font-size:9.2px;line-height:9.2px;font-weight:400;color:#7a6e84;font-family:'Liberation Sans',sans-serif;letter-spacing:-0.420px;">15.8%</div>
<svg style="left:240.5px;top:487.8px" width="11" height="10" viewBox="0 0 11 10"><g fill="none" stroke="#5f5366" stroke-width="1"><path d="M3.3,3.1 A2.2,2.2 0 1 1 7.7,3.1 C7.7,4.4 6.9,5.2 5.5,5.4 C4.1,5.2 3.3,4.4 3.3,3.1 Z"/><path d="M1,9.3 C1,7 2.6,5.6 4.2,5.3 M6.8,5.3 C8.4,5.6 10,7 10,9.3 Z M1,9.3 H10"/></g></svg>
<div class="a" style="left:264px;top:488.6px;width:9.3px;height:9.2px;background:#d0d0f5;border-radius:1.5px"></div>
<svg style="left:278.2px;top:490.1px" width="5" height="7" viewBox="0 0 5 7"><polyline points="1,1 3.5,3.5 1,6" fill="none" stroke="#3e3446" stroke-width="0.9" stroke-linecap="round" stroke-linejoin="round"/></svg>
<div class="t" style="left:286.10px;top:487.71px;font-size:9.5px;line-height:9.5px;font-weight:400;color:#3e3446;font-family:'Liberation Sans',sans-serif;letter-spacing:0.152px;">CursorWrapper.execute</div>
<div class="a" style="left:126.9px;top:345.8px;width:0.8px;height:238.2px;background:#e8e5ec"></div>
<div class="a" style="left:256.5px;top:345.8px;width:0.8px;height:238.2px;background:#e8e5ec"></div>
<div class="a" style="left:256.5px;top:369.3px;width:0.8px;height:18.7px;background:#8fb0ea"></div>
<div class="a" style="left:126.9px;top:369.3px;width:0.8px;height:18.7px;background:#8fb0ea"></div>
<div class="a" style="left:598.3px;top:345.8px;width:201.7px;height:238.2px;background:#fff"></div>
<div class="a" style="left:598.3px;top:345.8px;width:201.7px;height:23px;background:#f7f6f9"></div>
<div class="a" style="left:598.3px;top:368.5px;width:201.7px;height:0.8px;background:#e4e1e8"></div>
<div class="a" style="left:598px;top:345.8px;width:1px;height:238.2px;background:#e0dce5"></div>
<div class="t" style="left:606.20px;top:351.96px;font-size:9.5px;line-height:9.5px;font-weight:400;color:#3e3446;font-family:'Liberation Sans',sans-serif;letter-spacing:-0.137px;">Trace</div>
<div class="t" style="left:637.25px;top:351.96px;font-size:9.5px;line-height:9.5px;font-weight:700;color:#2b2233;font-family:'Liberation Sans',sans-serif;letter-spacing:-0.040px;">Environment</div>
<div class="a" style="left:637px;top:366.7px;width:59px;height:1.8px;background:#6c5fc7"></div>
<div class="t" style="left:605.60px;top:372.61px;font-size:9.2px;line-height:9.2px;font-weight:700;color:#2b2233;font-family:'Liberation Sans',sans-serif;letter-spacing:0.052px;">Model:</div>
<div class="t" style="left:638.30px;top:372.61px;font-size:9.2px;line-height:9.2px;font-weight:400;color:#2b2233;font-family:'Liberation Sans',sans-serif;letter-spacing:-0.031px;">Mac</div>
<div class="t" style="left:605.60px;top:385.61px;font-size:9.2px;line-height:9.2px;font-weight:700;color:#2b2233;font-family:'Liberation Sans',sans-serif;letter-spacing:0.292px;">Manufacturer:</div>
<div class="t" style="left:674.00px;top:385.61px;font-size:9.2px;line-height:9.2px;font-weight:400;color:#2b2233;font-family:'Liberation Sans',sans-serif;letter-spacing:0.589px;">unknown</div>
<div class="t" style="left:605.60px;top:398.61px;font-size:9.2px;line-height:9.2px;font-weight:700;color:#2b2233;font-family:'Liberation Sans',sans-serif;letter-spacing:0.083px;">Classification:</div>
<div class="t" style="left:673.00px;top:398.61px;font-size:9.2px;line-height:9.2px;font-weight:400;color:#2b2233;font-family:'Liberation Sans',sans-serif;letter-spacing:0.555px;">unknown</div>
<div class="t" style="left:605.60px;top:412.31px;font-size:9.2px;line-height:9.2px;font-weight:700;color:#2b2233;font-family:'Liberation Sans',sans-serif;letter-spacing:-0.637px;">OS:</div>
<div class="t" style="left:623.80px;top:412.31px;font-size:9.2px;line-height:9.2px;font-weight:400;color:#2b2233;font-family:'Liberation Sans',sans-serif;letter-spacing:0.332px;">Linux</div>
<div class="t" style="left:605.60px;top:425.21px;font-size:9.2px;line-height:9.2px;font-weight:700;color:#2b2233;font-family:'Liberation Sans',sans-serif;letter-spacing:-0.177px;">OS Version:</div>
<div class="t" style="left:660.25px;top:425.21px;font-size:9.2px;line-height:9.2px;font-weight:400;color:#2b2233;font-family:'Liberation Sans',sans-serif;letter-spacing:-0.272px;">6.1.123+</div>
<div class="t" style="left:605.60px;top:438.31px;font-size:9.2px;line-height:9.2px;font-weight:700;color:#2b2233;font-family:'Liberation Sans',sans-serif;letter-spacing:-0.051px;">Locale:</div>
<div class="t" style="left:641.50px;top:438.31px;font-size:9.2px;line-height:9.2px;font-weight:400;color:#2b2233;font-family:'Liberation Sans',sans-serif;letter-spacing:0.514px;">unknown</div>
<div class="a" style="left:135px;top:577.5px;width:665px;height:6.5px;background:#f7f7f9"></div>
<svg style="left:350.5px;top:307.5px" width="11" height="16" viewBox="0 0 11 16"><path d="M1,1 L1,12.6 L3.9,9.9 L6,14.6 L7.8,13.8 L5.8,9.3 L9.6,9.1 Z" fill="#111" stroke="#fff" stroke-width="0.9" stroke-linejoin="round"/></svg>
</body></html>
